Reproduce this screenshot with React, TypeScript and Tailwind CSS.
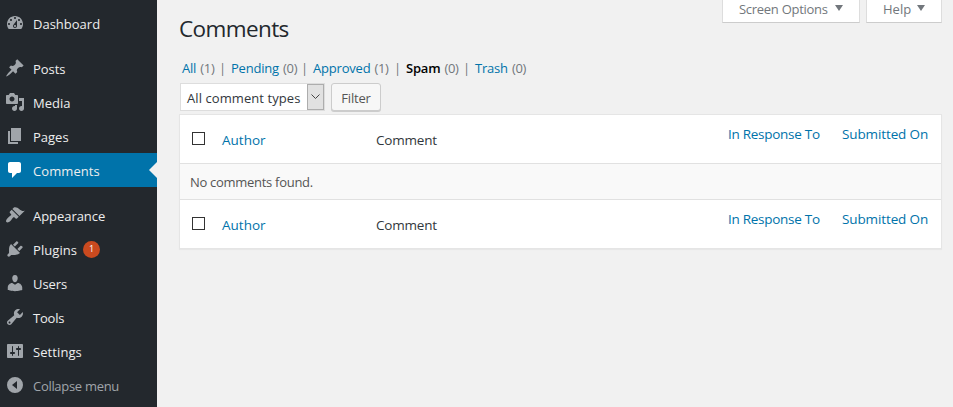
import clsx from "clsx";

type MenuItem = {
  label: string;
  icon: string;
  tracking?: string;
  active?: boolean;
  count?: number;
};

const menuGroups: MenuItem[][] = [
  [
    {
      label: "Dashboard",
      icon: "M3.76 16h12.48c1.1-1.37 1.76-3.11 1.76-5 0-4.42-3.58-8-8-8s-8 3.58-8 8c0 1.89.66 3.63 1.76 5zM10 4c.55 0 1 .45 1 1s-.45 1-1 1-1-.45-1-1 .45-1 1-1zM6 6c.55 0 1 .45 1 1s-.45 1-1 1-1-.45-1-1 .45-1 1-1zm8 0c.55 0 1 .45 1 1s-.45 1-1 1-1-.45-1-1 .45-1 1-1zm-5.37 5.55L12 7v6c0 1.1-.9 2-2 2s-2-.9-2-2c0-.57.24-1.08.63-1.45zM4 10c.55 0 1 .45 1 1s-.45 1-1 1-1-.45-1-1 .45-1 1-1zm12 0c.55 0 1 .45 1 1s-.45 1-1 1-1-.45-1-1 .45-1 1-1zm-5 3c0-.55-.45-1-1-1s-1 .45-1 1 .45 1 1 1 1-.45 1-1z",
    },
  ],
  [
    {
      label: "Posts",
      tracking: "tracking-[-0.05px]",
      icon: "M10.44 3.02l1.82-1.82 6.36 6.35-1.83 1.82c-1.05-.68-2.48-.57-3.41.36l-.75.75c-.92.93-1.04 2.35-.35 3.41l-1.83 1.82-2.41-2.41-2.8 2.79c-.42.42-3.38 2.71-3.8 2.29s1.86-3.39 2.28-3.81l2.79-2.79L4.1 9.36l1.83-1.82c1.05.69 2.48.57 3.4-.36l.75-.75c.93-.92 1.05-2.35.36-3.41z",
    },
    {
      label: "Media",
      icon: "M13 11V4c0-.55-.45-1-1-1h-1.67L9 1H5L3.67 3H2c-.55 0-1 .45-1 1v7c0 .55.45 1 1 1h10c.55 0 1-.45 1-1zM7 4.5c1.38 0 2.5 1.12 2.5 2.5S8.38 9.5 7 9.5 4.5 8.38 4.5 7 5.62 4.5 7 4.5zM14 6h5v10.5c0 1.38-1.12 2.5-2.5 2.5S14 17.88 14 16.5s1.12-2.5 2.5-2.5c.17 0 .34.02.5.05V9h-3V6zm-4 8.05V13h2v3.5c0 1.38-1.12 2.5-2.5 2.5S7 17.88 7 16.5 8.12 14 9.5 14c.17 0 .34.02.5.05z",
    },
    {
      label: "Pages",
      icon: "M6 15V2h10v13H6zm-1 1h8v2H3V5h2v11z",
    },
    {
      label: "Comments",
      tracking: "tracking-[0.08px]",
      active: true,
      icon: "M5 2h9c1.1 0 2 .9 2 2v7c0 1.1-.9 2-2 2h-2l-5 5v-5H5c-1.1 0-2-.9-2-2V4c0-1.1.9-2 2-2z",
    },
  ],
  [
    {
      label: "Appearance",
      tracking: "tracking-[-0.05px]",
      icon: "M14.48 11.06L7.41 3.99l1.5-1.5c.5-.56 2.3-.47 3.51.32 1.21.8 1.43 1.28 2.91 2.1 1.18.64 2.45 1.26 4.45.85zm-.71.71L6.7 4.7 4.93 6.47c-.39.39-.39 1.02 0 1.41l1.06 1.06c.39.39.39 1.03 0 1.42-.6.6-1.43 1.11-2.21 1.69-.35.26-.7.53-1.01.84C1.43 14.23.4 16.08 1.4 17.07c.99 1 2.84-.03 4.18-1.36.31-.31.58-.66.85-1.02.57-.78 1.08-1.61 1.69-2.21.39-.39 1.02-.39 1.41 0l1.06 1.06c.39.39 1.02.39 1.41 0z",
    },
    {
      label: "Plugins",
      tracking: "tracking-[0.08px]",
      count: 1,
      icon: "M13.11 4.36L9.87 7.6 8 5.73l3.24-3.24c.35-.34 1.05-.2 1.56.32.52.51.66 1.21.31 1.55zm-8 1.77l.91-1.12 9.01 9.01-1.19.84c-.71.71-2.63 1.16-3.82 1.16H6.14L4.9 17.26c-.59.59-1.54.59-2.12 0-.59-.58-.59-1.53 0-2.12l1.24-1.24v-3.88c0-1.13.4-3.19 1.09-3.89zm7.26 3.97l3.24-3.24c.34-.35 1.04-.21 1.55.31.52.51.66 1.21.31 1.55l-3.24 3.25z",
    },
    {
      label: "Users",
      tracking: "tracking-[-0.05px]",
      icon: "M10 9.25c-2.27 0-2.73-3.44-2.73-3.44C7 4.02 7.82 2 9.97 2c2.16 0 2.98 2.02 2.71 3.81 0 0-.41 3.44-2.68 3.44zm0 2.57L12.72 10c2.39 0 4.52 2.33 4.52 4.53v2.49s-3.65 1.13-7.24 1.13c-3.65 0-7.24-1.13-7.24-1.13v-2.49c0-2.25 1.94-4.48 4.47-4.48z",
    },
    {
      label: "Tools",
      tracking: "tracking-[-0.2px]",
      icon: "M16.68 9.77c-1.34 1.34-3.3 1.67-4.95.99l-5.41 6.52c-.99.99-2.59.99-3.58 0s-.99-2.59 0-3.57l6.52-5.42c-.68-1.65-.35-3.61.99-4.95 1.28-1.28 3.12-1.62 4.72-1.06l-2.89 2.89 2.82 2.82 2.86-2.87c.53 1.58.18 3.39-1.08 4.65zM3.81 16.21c.4.39 1.04.39 1.43 0 .4-.4.4-1.04 0-1.43-.39-.4-1.03-.4-1.43 0-.39.39-.39 1.03 0 1.43z",
    },
    {
      label: "Settings",
      tracking: "tracking-[0.08px]",
      icon: "M18 16V4c0-.55-.45-1-1-1H3c-.55 0-1 .45-1 1v12c0 .55.45 1 1 1h14c.55 0 1-.45 1-1zM8 11h1c.55 0 1 .45 1 1s-.45 1-1 1H8v1.5c0 .28-.22.5-.5.5s-.5-.22-.5-.5V13H6c-.55 0-1-.45-1-1s.45-1 1-1h1V5.5c0-.28.22-.5.5-.5s.5.22.5.5V11zm5-2h-1c-.55 0-1-.45-1-1s.45-1 1-1h1V5.5c0-.28.22-.5.5-.5s.5.22.5.5V7h1c.55 0 1 .45 1 1s-.45 1-1 1h-1v5.5c0 .28-.22.5-.5.5s-.5-.22-.5-.5V9z",
    },
  ],
];

const filters = [
  { label: "All", count: 1, width: "w-[34px]" },
  { label: "Pending", count: 0, width: "w-[67px]" },
  { label: "Approved", count: 1, width: "w-[78px]" },
  { label: "Spam", count: 0, width: "w-[54px]", current: true },
  { label: "Trash", count: 0, width: "w-[52px]" },
];

const MenuIcon = ({ path }: { path: string }) => (
  <svg viewBox="0 0 20 20" className="h-5 w-5 shrink-0 fill-current">
    <path d={path} />
  </svg>
);

const SidebarItem = ({ item }: { item: MenuItem }) => (
  <a
    href="#"
    className={clsx(
      "relative flex h-[34px] items-center pl-[5px]",
      item.active ? "bg-[#0073aa] text-white" : "text-[#a0a5aa]"
    )}
  >
    <MenuIcon path={item.icon} />
    <span className={clsx("ml-2 pt-[3px] text-[13px] text-[#eeeeee]", item.tracking)}>{item.label}</span>
    {item.count && (
      <span className="ml-1.5 flex h-[17px] w-[17px] items-center justify-center rounded-full bg-[#ca4a1f] text-[9px] text-white">
        {item.count}
      </span>
    )}
    {item.active && (
      <span className="absolute top-[9px] right-0 border-y-8 border-r-8 border-y-transparent border-r-[#f1f1f1]" />
    )}
  </a>
);

const ScreenTab = ({ label, className }: { label: string; className: string }) => (
  <button
    className={clsx(
      "flex h-[23px] justify-between border border-t-0 border-[#dddddd] border-b-[#cccccc] bg-white px-4 text-[13px] leading-[19px] text-[#72777c]",
      className
    )}
  >
    {label}
    <svg viewBox="0 0 8 6" className="mt-[5px] h-1.5 w-2 fill-[#72777c]">
      <path d="M0 0h8L4 6z" />
    </svg>
  </button>
);

const HeaderRow = () => (
  <div className="flex h-12 text-[13.5px] leading-5 text-[#32373c]">
    <span className="mt-[17px] ml-3 h-[13px] w-[13px] border border-[#333333] bg-white" />
    <a href="#" className="mt-[15px] ml-[17px] w-[154px] text-[#0073aa]">
      Author
    </a>
    <span className="mt-[15px] flex-1 tracking-[-0.2px]">Comment</span>
    <a href="#" className="mt-[9px] w-[114px] tracking-[-0.28px] whitespace-nowrap text-[#0073aa]">
      In Response To
    </a>
    <a href="#" className="mt-[9px] w-[99px] tracking-[-0.12px] whitespace-nowrap text-[#0073aa]">
      Submitted On
    </a>
  </div>
);

export default function App() {
  return (
    <div className="flex h-[407px] w-[953px] overflow-hidden bg-[#f1f1f1] font-['Open_Sans','Noto_Sans',sans-serif] text-[13px]">
      <aside className="flex w-[157px] shrink-0 flex-col bg-[#23282d] pt-[6px]">
        <nav className="flex flex-col gap-[11px]">
          {menuGroups.map((group) => (
            <div key={group[0].label}>
              {group.map((item) => (
                <SidebarItem key={item.label} item={item} />
              ))}
            </div>
          ))}
        </nav>
        <button className="flex h-[34px] items-center pl-[5px] text-[#a0a5aa]">
          <MenuIcon path="M10 2a8 8 0 1 0 0 16 8 8 0 0 0 0-16zM12 6v8l-5-4z" />
          <span className="ml-2 pt-[3px] text-[13px] tracking-[-0.3px]">Collapse menu</span>
        </button>
      </aside>

      <main className="flex flex-1 flex-col pr-[11px] pl-[22px]">
        <div className="flex h-[59px] justify-between">
          <h1 className="mt-[14px] text-[22.5px] leading-[30px] tracking-[-0.6px] text-[#23282d]">Comments</h1>
          <div className="flex gap-[6px]">
            <ScreenTab label="Screen Options" className="w-[138px] tracking-[-0.28px]" />
            <ScreenTab label="Help" className="w-[76px]" />
          </div>
        </div>

        <ul className="flex h-6 pl-[3px] leading-[18px] whitespace-nowrap text-[#72777c]">
          {filters.map((filter, i) => (
            <li key={filter.label} className="flex">
              <span className={clsx("flex gap-1 tracking-[-0.2px]", filter.width)}>
                <a href="#" className={filter.current ? "font-semibold text-black" : "text-[#0073aa]"}>
                  {filter.label}
                </a>
                <span className="tracking-[-0.3px]">({filter.count})</span>
              </span>
              {i < filters.length - 1 && <span className="ml-[3px] w-3">|</span>}
            </li>
          ))}
        </ul>

        <div className="flex h-[31px] items-start pl-px">
          <div className="flex h-7 w-[145px] items-center border border-[#dddddd] bg-white pl-1.5 text-[#32373c]">
            <span className="flex-1 pt-[3px] tracking-[0.08px] whitespace-nowrap">All comment types</span>
            <span className="flex h-[26px] w-[17px] items-center justify-center border border-[#adadad] bg-[#e1e1e1]">
              <svg viewBox="0 0 9 6" className="h-1.5 w-[9px] fill-none stroke-[#444444]">
                <path d="M.5.5l4 4 4-4" />
              </svg>
            </span>
          </div>
          <button className="ml-1.5 h-7 w-[50px] rounded-[3px] border border-[#cccccc] bg-[#f7f7f7] pt-[3px] tracking-[-0.2px] text-[#555555] shadow-[0_1px_0_#cccccc]">
            Filter
          </button>
        </div>

        <div className="border border-[#e5e5e5] bg-white shadow-[0_1px_1px_rgba(0,0,0,0.04)]">
          <HeaderRow />
          <div className="h-[37px] border-y border-[#e1e1e1] bg-[#f9f9f9] pl-[10px] leading-[36px] tracking-[-0.29px] text-[#555555]">
            No comments found.
          </div>
          <HeaderRow />
        </div>
      </main>
    </div>
  );
}
